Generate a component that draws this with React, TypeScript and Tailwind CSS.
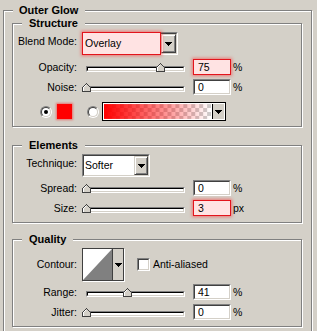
import type { ReactNode } from 'react'

const sunkenOuter = 'border border-t-[#808080] border-l-[#808080] border-r-white border-b-white'
const sunkenInner = 'border border-t-[#404040] border-l-[#404040] border-r-[#d4d0c8] border-b-[#d4d0c8]'

function Group({ title, className, pad, children }: { title: string; className?: string; pad: string; children: ReactNode }) {
  return (
    <div className={`relative border border-[#808080] shadow-[inset_1px_1px_0_#fff,1px_1px_0_#fff] ${className ?? ''}`}>
      <span className={`absolute -top-[7px] left-[9px] bg-[#d4d0c8] text-[11px] font-bold leading-[13px] ${pad}`}>{title}</span>
      {children}
    </div>
  )
}

function Label({ children, lift }: { children: ReactNode; lift?: boolean }) {
  return <div className={`w-[64px] shrink-0 text-right ${lift ? 'mb-[5px]' : ''}`}>{children}</div>
}

function Arrow() {
  return (
    <svg width="7" height="4" viewBox="0 0 7 4" shapeRendering="crispEdges">
      <path d="M0 0h7v1h-1v1h-1v1h-1v1h-1v-1h-1v-1h-1v-1h-1z" fill="#000" />
    </svg>
  )
}

function DropButton({ w }: { w: string }) {
  return (
    <div
      className={`flex ${w} shrink-0 items-center justify-center border border-t-[#d4d0c8] border-l-[#d4d0c8] border-r-[#404040] border-b-[#404040] bg-[#d4d0c8] shadow-[inset_1px_1px_0_#fff,inset_-1px_-1px_0_#808080]`}
    >
      <Arrow />
    </div>
  )
}

function NumField({ value, hot }: { value: string; hot?: boolean }) {
  if (hot) {
    return (
      <div className="flex h-[16px] w-[38px] shrink-0 items-center border border-[#e3141c] bg-[#ffe3e3] pl-[4px] shadow-[0_0_3px_1px_rgba(255,50,50,0.55)]">
        {value}
      </div>
    )
  }
  return (
    <div className={`h-[16px] w-[38px] shrink-0 ${sunkenOuter}`}>
      <div className={`flex h-full items-center bg-white pl-[3px] ${sunkenInner}`}>{value}</div>
    </div>
  )
}

function Slider({ pct }: { pct: number }) {
  return (
    <div className="relative flex h-[9px] w-[108px] shrink-0 flex-col justify-end">
      <div className={`ml-[4px] mr-[5px] h-[6px] ${sunkenOuter}`}>
        <div className="h-full border border-t-black border-l-black border-r-[#d4d0c8] border-b-[#d4d0c8] bg-white" />
      </div>
      <svg
        className="absolute top-0"
        style={{ left: Math.round((pct / 100) * 99) }}
        width="9"
        height="9"
        viewBox="0 0 9 9"
        shapeRendering="crispEdges"
      >
        <path d="M0.5 8.5V4.5L4.5 0.5L8.5 4.5V8.5Z" fill="#d4d0c8" stroke="#404040" />
        <path d="M1.5 7.5V4.8L4.5 1.8" fill="none" stroke="#fff" />
      </svg>
    </div>
  )
}

function SliderRow({ label, pct, value, unit, hot, className }: { label: string; pct: number; value: string; unit: string; hot?: boolean; className?: string }) {
  return (
    <div className={`flex h-[16px] items-center ${className ?? ''}`}>
      <Label>{label}</Label>
      <div className="ml-[5px]">
        <Slider pct={pct} />
      </div>
      <div className="ml-[3px]">
        <NumField value={value} hot={hot} />
      </div>
      <span className="ml-[2px]">{unit}</span>
    </div>
  )
}

function Radio({ on }: { on?: boolean }) {
  return (
    <div className="h-[12px] w-[12px] shrink-0 rounded-full border border-t-[#808080] border-l-[#808080] border-r-white border-b-white">
      <div className="flex h-full w-full items-center justify-center rounded-full border border-t-[#404040] border-l-[#404040] border-r-[#d4d0c8] border-b-[#d4d0c8] bg-white">
        {on && <div className="h-[4px] w-[4px] rounded-full bg-black" />}
      </div>
    </div>
  )
}

function GradientPicker() {
  return (
    <div className="flex h-[19px] w-[124px] shrink-0 border border-black bg-white p-[1px]">
      <svg width="108" height="15" viewBox="0 0 108 15">
        <defs>
          <pattern id="chk" width="8" height="8" patternUnits="userSpaceOnUse">
            <rect width="8" height="8" fill="#fff" />
            <rect width="4" height="4" fill="#cccccc" />
            <rect x="4" y="4" width="4" height="4" fill="#cccccc" />
          </pattern>
          <linearGradient id="fade" x1="0" x2="1" y1="0" y2="0">
            <stop offset="0" stopColor="#ff0000" stopOpacity="1" />
            <stop offset="1" stopColor="#ff0000" stopOpacity="0" />
          </linearGradient>
        </defs>
        <rect width="108" height="15" fill="url(#chk)" />
        <rect width="108" height="15" fill="url(#fade)" />
      </svg>
      <div className="ml-[1px] flex w-[12px] items-center justify-center border-l border-black bg-[#d4d0c8]">
        <Arrow />
      </div>
    </div>
  )
}

function ContourPicker() {
  return (
    <div className="flex h-[33px] w-[42px] shrink-0 border border-[#404040] bg-[#d4d0c8] shadow-[1px_1px_0_#fff]">
      <svg width="29" height="31" viewBox="0 0 29 31">
        <rect width="29" height="31" fill="#fff" />
        <path d="M0 31L29 0V31Z" fill="#808080" />
      </svg>
      <div className="flex flex-1 items-center justify-center border-l border-[#404040]">
        <Arrow />
      </div>
    </div>
  )
}

function Checkbox() {
  return (
    <div className={`h-[13px] w-[13px] shrink-0 ${sunkenOuter}`}>
      <div className={`h-full w-full bg-white ${sunkenInner}`} />
    </div>
  )
}

export default function App() {
  return (
    <div className="h-[331px] w-[317px] overflow-hidden bg-[#d4d0c8] pt-[10px] font-['Tahoma','Liberation_Sans',Arial,sans-serif] text-[10.5px] leading-[13px] text-black">
      <Group title="Outer Glow" pad="pl-[6px] pr-[7px]" className="ml-[3px] w-[309px] pb-[12px] pl-[8px] pt-[12px]">
        {/* Structure */}
        <Group title="Structure" pad="px-[7px]" className="w-[290px] pb-[5px] pt-[8px]">
          <div className="flex h-[23px] items-center">
            <Label lift>Blend Mode:</Label>
            <div className={`ml-[5px] flex h-[23px] w-[96px] ${sunkenOuter}`}>
              <div className={`flex flex-1 bg-white ${sunkenInner}`}>
                <div className="relative z-10 -my-[2px] -ml-[2px] flex flex-1 items-center border border-[#e3141c] bg-[#ffe3e3] pl-[2px] shadow-[0_0_3px_1px_rgba(255,50,50,0.55)]">
                  Overlay
                </div>
                <DropButton w="w-[15px]" />
              </div>
            </div>
          </div>
          <SliderRow className="mt-[4px]" label="Opacity:" pct={75} value="75" unit="%" hot />
          <SliderRow className="mt-[4px]" label="Noise:" pct={0} value="0" unit="%" />
          <div className="mt-[7px] flex h-[19px] items-center">
            <div className="ml-[27px]">
              <Radio on />
            </div>
            <div className="ml-[5px] h-[15px] w-[15px] bg-[#ff0000] shadow-[0_0_2px_1px_rgba(255,0,0,0.45)]" />
            <div className="ml-[15px]">
              <Radio />
            </div>
            <div className="ml-[3px]">
              <GradientPicker />
            </div>
          </div>
        </Group>

        {/* Elements */}
        <Group title="Elements" pad="px-[7px]" className="mt-[18px] w-[290px] pb-[6px] pt-[8px]">
          <div className="flex h-[23px] items-center">
            <Label lift>Technique:</Label>
            <div className={`ml-[5px] flex h-[23px] w-[68px] ${sunkenOuter}`}>
              <div className={`flex flex-1 bg-white ${sunkenInner}`}>
                <div className="flex flex-1 items-center pl-[1px]">Softer</div>
                <DropButton w="w-[14px]" />
              </div>
            </div>
          </div>
          <SliderRow className="mt-[3px]" label="Spread:" pct={0} value="0" unit="%" />
          <SliderRow className="mt-[4px]" label="Size:" pct={0} value="3" unit="px" hot />
        </Group>

        {/* Quality */}
        <Group title="Quality" pad="px-[7px]" className="mt-[16px] w-[290px] pb-[6px] pt-[8px]">
          <div className="flex h-[33px] items-center">
            <Label>Contour:</Label>
            <div className="ml-[5px]">
              <ContourPicker />
            </div>
            <div className="ml-[13px]">
              <Checkbox />
            </div>
            <span className="ml-[3px]">Anti-aliased</span>
          </div>
          <SliderRow className="mt-[3px]" label="Range:" pct={41} value="41" unit="%" />
          <SliderRow className="mt-[4px]" label="Jitter:" pct={0} value="0" unit="%" />
        </Group>
      </Group>
    </div>
  )
}
